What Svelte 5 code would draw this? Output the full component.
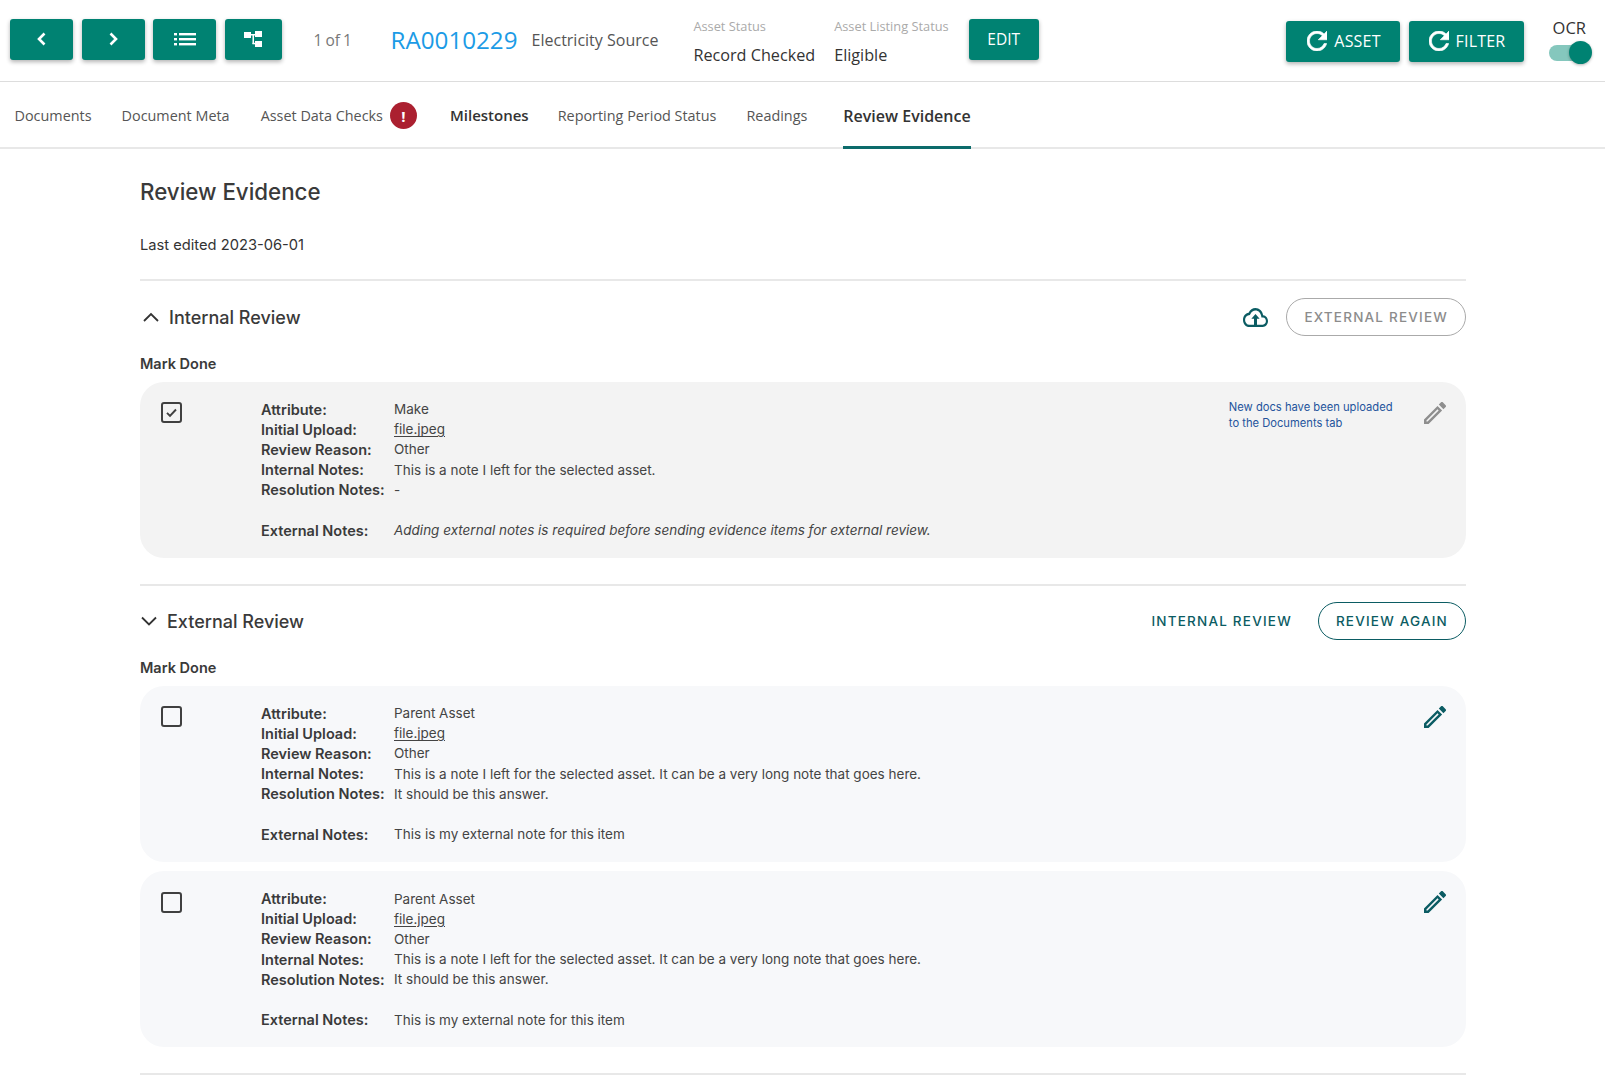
<script>
  const tabs = [
    { label: 'Documents', cls: 'w1' },
    { label: 'Document Meta', cls: 'w2' },
    { label: 'Asset Data Checks', cls: 'w3', alert: true },
    { label: 'Milestones', cls: 'w4 bold' },
    { label: 'Reporting Period Status', cls: 'w5' },
    { label: 'Readings', cls: 'w6' },
    { label: 'Review Evidence', cls: 'bold active' },
  ]

  const longNote = 'This is a note I left for the selected asset. It can be a very long note that goes here.'

  const externalItems = [
    { attribute: 'Parent Asset', internal: longNote, resolution: 'It should be this answer.', external: 'This is my external note for this item' },
    { attribute: 'Parent Asset', internal: longNote, resolution: 'It should be this answer.', external: 'This is my external note for this item' },
  ]

  const internalItem = {
    attribute: 'Make',
    internal: 'This is a note I left for the selected asset.',
    resolution: '-',
    external: 'Adding external notes is required before sending evidence items for external review.',
  }
</script>

{#snippet pencil()}
  <svg class="pencil" viewBox="3 3 18 18" width="22" height="22">
    <path d="M3 17.250V21h3.750L17.810 9.940l-3.750-3.750L3 17.250zM5.920 19H5v-.920l9.060-9.060.920.920L5.920 19zM20.710 5.630l-2.340-2.340c-.390-.390-1.020-.390-1.410 0l-1.830 1.830 3.750 3.750 1.830-1.830c.390-.390.390-1.020 0-1.410z" fill="currentColor" />
  </svg>
{/snippet}

{#snippet refresh()}
  <svg viewBox="4 4 16 16" width="20" height="20">
    <path d="M17.650 6.350C16.200 4.900 14.210 4 12 4c-4.420 0-7.990 3.580-7.990 8s3.570 8 7.990 8c3.730 0 6.840-2.550 7.730-6h-2.080c-.820 2.330-3.040 4-5.650 4-3.310 0-6-2.690-6-6s2.690-6 6-6c1.660 0 3.140.690 4.220 1.780L13 11h7V4l-2.350 2.350z" fill="currentColor" stroke="currentColor" stroke-width="0.500" />
  </svg>
{/snippet}

{#snippet item(it, done)}
  <div class="card" class:done>
    <span class="checkbox">
      {#if done}
        <svg viewBox="0 0 20 20" width="15" height="15">
          <path d="M4 10.500l4 4 8-8.500" fill="none" stroke="#404040" stroke-width="2.600" />
        </svg>
      {/if}
    </span>
    <div class="fields">
      <b>Attribute:</b><span>{it.attribute}</span>
      <b>Initial Upload:</b><span><u>file.jpeg</u></span>
      <b>Review Reason:</b><span>Other</span>
      <b>Internal Notes:</b><span>{it.internal}</span>
      <b>Resolution Notes:</b><span>{it.resolution}</span>
      <b class="ext">External Notes:</b><span class="ext" class:em={done}>{it.external}</span>
    </div>
    {#if done}
      <p class="notice">New docs have been uploaded<br />to the Documents tab</p>
    {/if}
    {@render pencil()}
  </div>
{/snippet}

<header>
  <div class="navs">
    <button class="btn nav">
      <svg viewBox="0 0 16 16" width="16" height="16"><path d="M10.500 2.500L5 8l5.500 5.500" fill="none" stroke="#fff" stroke-width="2.600" /></svg>
    </button>
    <button class="btn nav">
      <svg viewBox="0 0 16 16" width="16" height="16"><path d="M5.500 2.500L11 8l-5.500 5.500" fill="none" stroke="#fff" stroke-width="2.600" /></svg>
    </button>
    <button class="btn nav">
      <svg viewBox="0 0 22 16" width="22" height="16" fill="#fff">
        <rect x="0" y="2" width="3" height="2.400" /><rect x="5" y="2" width="17" height="2.400" />
        <rect x="0" y="7" width="3" height="2.400" /><rect x="5" y="7" width="17" height="2.400" />
        <rect x="0" y="12" width="3" height="2.400" /><rect x="5" y="12" width="17" height="2.400" />
      </svg>
    </button>
    <button class="btn tree">
      <svg viewBox="0 0 18 18" width="18" height="18" fill="#fff">
        <rect x="0" y="2" width="7" height="6" /><rect x="11" y="1" width="7" height="6" /><rect x="11" y="11" width="7" height="6" />
        <rect x="7" y="4" width="4" height="1.500" /><rect x="8.500" y="4" width="1.500" height="10" /><rect x="8.500" y="12.800" width="3" height="1.500" />
      </svg>
    </button>
  </div>
  <span class="count">1 of 1</span>
  <a class="asset-id" href="#top">RA0010229</a>
  <span class="source">Electricity Source</span>
  <div class="status first">
    <small>Asset Status</small>
    <span>Record Checked</span>
  </div>
  <div class="status second">
    <small>Asset Listing Status</small>
    <span>Eligible</span>
  </div>
  <button class="btn edit">EDIT</button>
  <div class="right">
    <button class="btn reload asset">{@render refresh()}ASSET</button>
    <button class="btn reload filter">{@render refresh()}FILTER</button>
    <div class="ocr">
      <span>OCR</span>
      <div class="toggle"><i></i></div>
    </div>
  </div>
</header>

<nav>
  {#each tabs as tab}
    <div class="tab {tab.cls}">
      {tab.label}
      {#if tab.alert}<span class="alert">!</span>{/if}
    </div>
  {/each}
</nav>

<main>
  <h1>Review Evidence</h1>
  <p class="edited">Last edited 2023-06-01</p>

  <section>
    <div class="sec-head">
      <svg class="chev up" viewBox="0 0 16 10" width="16" height="10"><path d="M1 9l7-7 7 7" fill="none" stroke="#333" stroke-width="1.800" /></svg>
      <h2>Internal Review</h2>
      <svg class="cloud" viewBox="0 4 24 16" width="25" height="19" preserveAspectRatio="none">
        <path d="M19.350 10.040C18.670 6.590 15.640 4 12 4 9.110 4 6.600 5.640 5.350 8.040 2.340 8.360 0 10.910 0 14c0 3.310 2.690 6 6 6h13c2.760 0 5-2.240 5-5 0-2.640-2.050-4.780-4.650-4.960zM19 18H6c-2.210 0-4-1.790-4-4 0-2.050 1.530-3.760 3.560-3.970l1.070-.110.500-.950C8.080 7.140 9.940 6 12 6c2.620 0 4.880 1.860 5.390 4.430l.300 1.500 1.530.110c1.560.100 2.780 1.410 2.780 2.960 0 1.650-1.350 3-3 3zM8 13h2.550v6h2.900v-6H16l-4-4z" fill="#0b5c63" />
      </svg>
      <button class="pill disabled">EXTERNAL REVIEW</button>
    </div>
    <h3>Mark Done</h3>
    {@render item(internalItem, true)}
  </section>

  <section class="second-sec">
    <div class="sec-head">
      <svg class="chev down" viewBox="0 0 16 10" width="16" height="10"><path d="M1 1.500l7 7 7-7" fill="none" stroke="#333" stroke-width="1.800" /></svg>
      <h2>External Review</h2>
      <span class="text-link">INTERNAL REVIEW</span>
      <button class="pill">REVIEW AGAIN</button>
    </div>
    <h3>Mark Done</h3>
    <div class="cards">
      {#each externalItems as it}
        {@render item(it, false)}
      {/each}
    </div>
  </section>
</main>

<style>
  :global(body) {
    font-family: Inter, sans-serif;
    color: #333;
    background: #fff;
  }

  header {
    height: 81px;
    border-bottom: 1px solid #ddd;
    display: flex;
    align-items: center;
    padding-left: 10px;
    padding-right: 19px;
    font-family: 'Open Sans', sans-serif;
    box-sizing: content-box;
  }

  .btn {
    border: 0;
    background: #008272;
    color: #fff;
    border-radius: 3px;
    height: 41px;
    padding: 0;
    display: flex;
    align-items: center;
    justify-content: center;
    box-shadow: 0 2px 4px rgba(0, 0, 0, 0.3);
    font-family: 'Open Sans', sans-serif;
  }

  .navs {
    display: flex;
    gap: 8.500px;
    margin-top: -3px;
  }
  .nav {
    width: 63px;
  }
  .tree {
    width: 57px;
  }

  .count {
    margin-left: 32px;
    font-size: 15.500px;
    word-spacing: -1px;
    color: #777;
    width: 77px;
    margin-top: -2px;
  }
  .asset-id {
    font-size: 24.200px;
    color: #1b9be6;
    text-decoration: none;
    margin-top: -2px;
  }
  .source {
    margin-left: 14px;
    font-size: 16px;
    color: #555;
    margin-top: -2px;
  }

  .status {
    display: flex;
    flex-direction: column;
    gap: 9px;
    font-size: 16.200px;
    color: #333;
    margin-top: 1px;
  }
  .status small {
    font-size: 12.800px;
    color: #aaa;
  }
  .status.first {
    margin-left: 35px;
  }
  .status.second {
    margin-left: 19px;
  }

  .edit {
    width: 70px;
    margin-left: 20px;
    margin-top: -3px;
    font-size: 15.500px;
  }

  .right {
    margin-left: auto;
    display: flex;
    align-items: center;
  }
  .reload {
    gap: 7px;
    padding-left: 2px;
    font-size: 16px;
    letter-spacing: 0.200px;
    margin-top: 1px;
  }
  .asset {
    width: 114px;
  }
  .filter {
    width: 115px;
    margin-left: 8.500px;
  }
  .ocr {
    margin-left: 25.500px;
    display: flex;
    flex-direction: column;
    align-items: flex-end;
    font-size: 16.500px;
    color: #333;
    margin-top: -1px;
  }
  .ocr span {
    margin-right: 0;
    line-height: 24px;
    margin-bottom: 4px;
    margin-top: -3px;
  }
  .toggle {
    width: 37px;
    height: 16px;
    border-radius: 8px;
    background: #85c7bd;
    margin-top: 1px;
    position: relative;
  }
  .toggle i {
    position: absolute;
    right: -6px;
    top: -4px;
    width: 23px;
    height: 23px;
    border-radius: 50%;
    background: #008272;
    box-shadow: 0 1px 3px rgba(0, 0, 0, 0.3);
  }

  nav {
    height: 65px;
    border-bottom: 2px solid #e8e8e8;
    display: flex;
    align-items: stretch;
    padding-left: 14.500px;
    font-family: 'Open Sans', sans-serif;
    font-size: 14.400px;
    color: #555;
  }
  .tab {
    display: flex;
    align-items: center;
    white-space: nowrap;
    margin-right: 30px;
    padding-top: 2px;
  }
  .tab.w1 {
    padding-bottom: 1px;
  }
  .tab.w2 {
    margin-right: 31px;
  }
  .tab.w3 {
    margin-right: 33px;
  }
  .tab.w4 {
    font-size: 15px;
    margin-right: 29px;
    padding-bottom: 1px;
  }
  .tab.bold {
    font-weight: 600;
    color: #333;
  }
  .tab.active {
    margin-bottom: -2px;
    border-bottom: 3px solid #0c6b6b;
    padding-top: 3px;
    padding-bottom: 0;
    margin-right: 0;
    margin-left: 6px;
    font-size: 16px;
  }
  .alert {
    width: 27px;
    height: 27px;
    margin-left: 7px;
    border-radius: 50%;
    background: #ab2030;
    color: #fff;
    font-weight: 700;
    font-size: 15px;
    display: flex;
    align-items: center;
    justify-content: center;
  }

  main {
    margin: 0 139px 0 140px;
  }
  h1 {
    margin: 0;
    padding-top: 28px;
    font-size: 22.300px;
    line-height: 30px;
    font-weight: 500;
    color: #3a3a3a;
  }
  .edited {
    margin: 0;
    padding-top: 28px;
    padding-bottom: 24px;
    font-size: 14.700px;
    line-height: 20px;
    border-bottom: 2px solid #e8e8e8;
  }

  section {
    border-bottom: 2px solid #e8e8e8;
    padding-bottom: 26.500px;
  }
  .second-sec {
    padding-bottom: 26px;
  }

  .sec-head {
    height: 38px;
    margin-top: 17px;
    display: flex;
    align-items: center;
  }
  .second-sec .sec-head {
    margin-top: 16px;
  }
  h2 {
    margin: 0 auto 0 0;
    font-size: 18px;
    font-weight: 500;
    color: #3a3a3a;
  }
  .chev.up {
    margin: 0 10px 0 3px;
  }
  .chev.down {
    margin: 0 10px 0 1px;
  }
  .cloud {
    margin-right: 18px;
  }
  .pill {
    height: 38px;
    padding: 0 17px;
    border-radius: 19px;
    border: 1.500px solid #0b5c63;
    background: #fff;
    color: #0b5c63;
    font-family: Inter, sans-serif;
    font-size: 13.500px;
    font-weight: 500;
    letter-spacing: 1.200px;
  }
  .pill.disabled {
    border-color: #aaa;
    color: #8c8c8c;
  }
  .text-link {
    color: #0b5c63;
    font-size: 13.500px;
    font-weight: 500;
    letter-spacing: 1.200px;
    margin-right: 26px;
  }

  h3 {
    margin: 0;
    padding-top: 19px;
    padding-bottom: 8.500px;
    font-size: 14.500px;
    line-height: 18px;
    font-weight: 600;
    color: #3a3a3a;
  }

  .cards {
    display: flex;
    flex-direction: column;
    gap: 9.500px;
  }
  .card {
    height: 176px;
    background: #f7f8fa;
    border-radius: 24px;
    box-sizing: border-box;
    padding: 17.500px 20px 0 21px;
    display: flex;
    align-items: flex-start;
    color: #0b5c63;
  }
  .card.done {
    background: #f3f3f3;
    color: #8e8e8e;
  }
  .checkbox {
    width: 21px;
    height: 21px;
    flex: none;
    margin-top: 3px;
    border: 2.500px solid #404040;
    border-radius: 3px;
    box-sizing: border-box;
    display: flex;
    align-items: center;
    justify-content: center;
  }
  .fields {
    margin-left: 79px;
    display: grid;
    grid-template-columns: 133px 1fr;
    grid-auto-rows: 20.200px;
    align-items: center;
    flex: 1;
    font-size: 13.500px;
    color: #444;
  }
  .fields b {
    font-size: 14.500px;
    font-weight: 600;
    color: #3a3a3a;
  }
  .fields .ext {
    margin-top: 40px;
    grid-row-end: span 1;
  }
  .fields .em {
    font-style: italic;
  }
  .fields u {
    text-underline-offset: 2px;
  }
  .notice {
    margin: 0 30px 0 0;
    font-size: 11.200px;
    line-height: 16px;
    color: #24539c;
    white-space: nowrap;
  }
  .pencil {
    flex: none;
    margin-top: 2.500px;
    margin-left: 1.500px;
  }
</style>
